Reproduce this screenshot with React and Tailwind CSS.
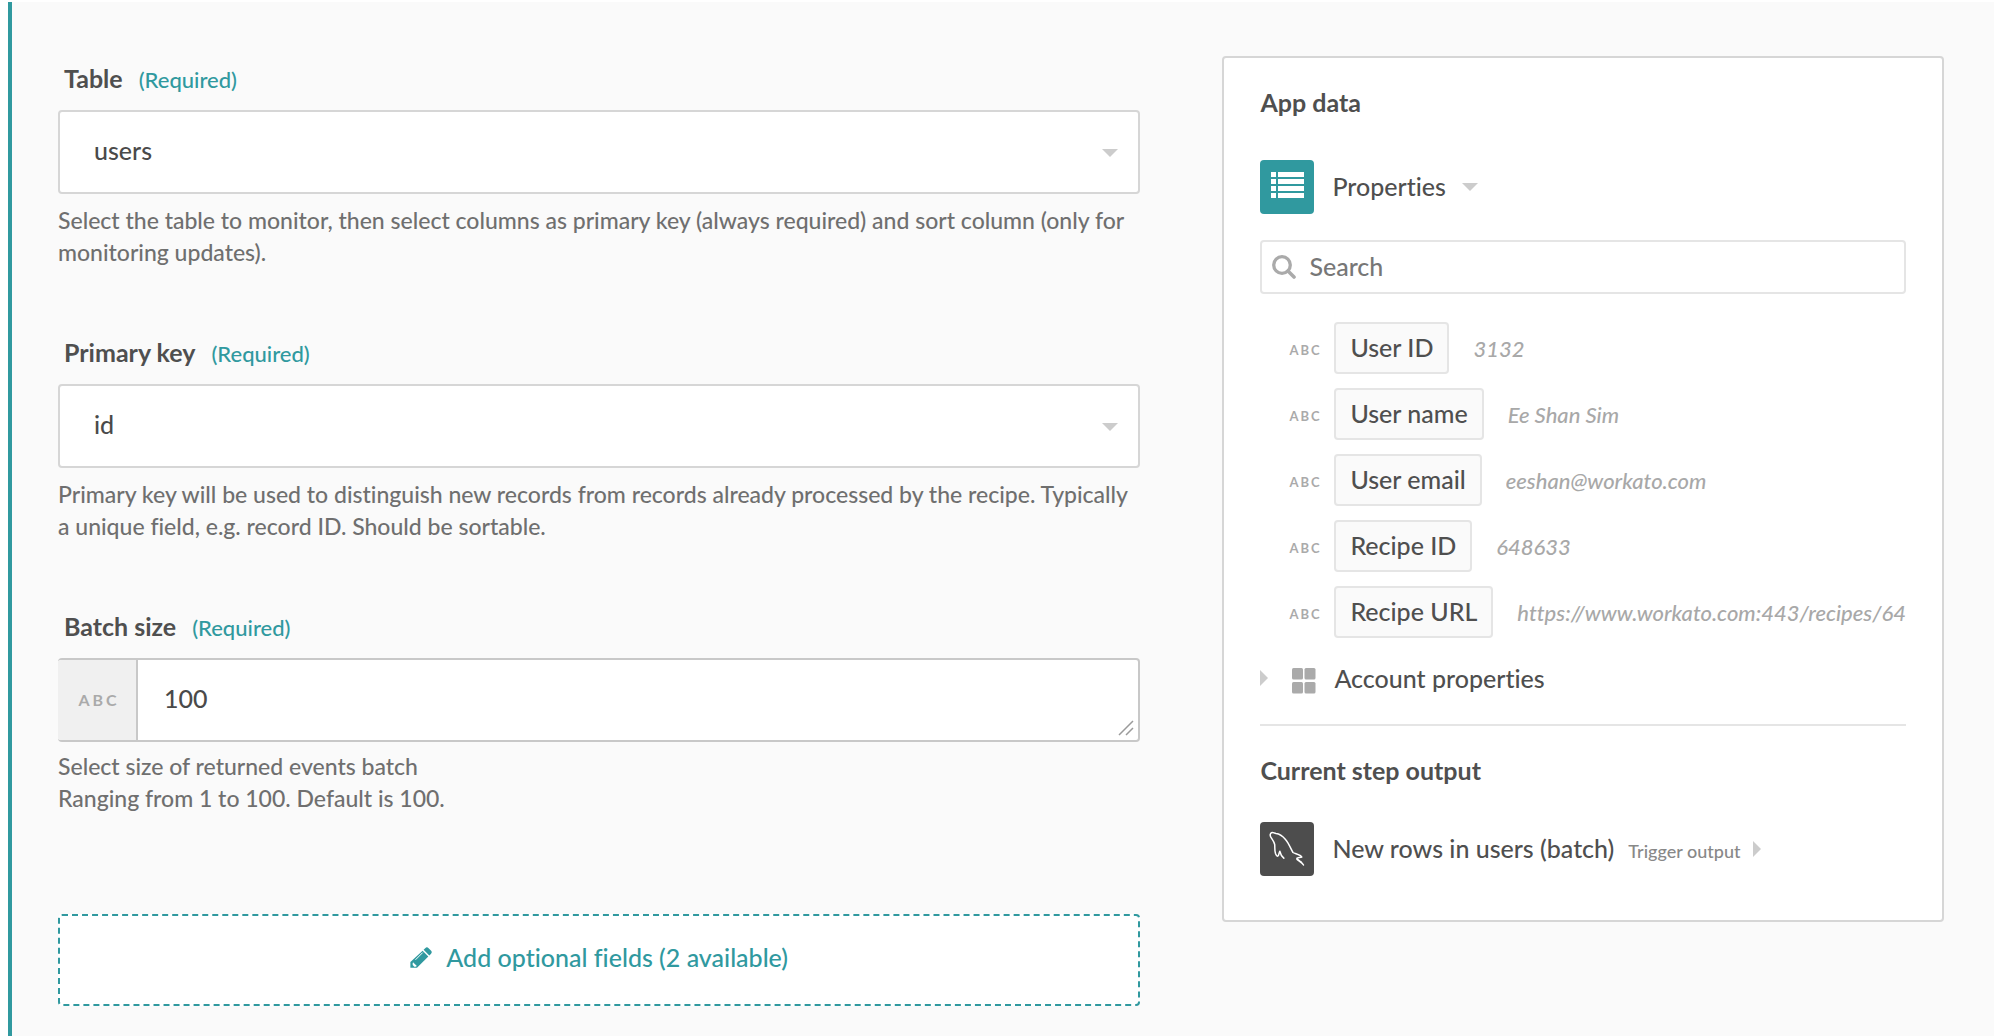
import React from "react";

function CaretDown() {
  return (
    <svg className="h-2 w-4 shrink-0 fill-[#ccc]" viewBox="0 0 16 8" aria-hidden="true">
      <path d="M0 0h16L8 8z" />
    </svg>
  );
}

function CaretRight() {
  return (
    <svg className="h-4 w-2 shrink-0 fill-[#ccc]" viewBox="0 0 8 16" aria-hidden="true">
      <path d="M0 0v16l8-8z" />
    </svg>
  );
}

function FieldLabel({ id, children }) {
  return (
    <div className="mb-3.5 flex items-baseline gap-4 px-1.5 leading-8">
      <label htmlFor={id} className="text-[25px] font-bold text-[#4f4f4f]">{children}</label>
      <span className="text-[22px] text-[#30999f]">(Required)</span>
    </div>
  );
}

function SelectField({ id, label, value, help }) {
  return (
    <div>
      <FieldLabel id={id}>{label}</FieldLabel>
      <div className="relative">
        <select
          id={id}
          defaultValue={value}
          className="block h-[84px] w-full appearance-none rounded border-2 border-[#d6d6d6] bg-white px-[34px] pb-0.5 text-[25px] text-[#4a4a4a]"
        >
          <option value={value}>{value}</option>
        </select>
        <span className="pointer-events-none absolute inset-y-0 right-[22px] flex items-center pt-0.5">
          <CaretDown />
        </span>
      </div>
      <p className="mt-2.5 text-[23px] leading-8 text-[#6f6f6f]">{help}</p>
    </div>
  );
}

const properties = [
  ["User ID", "3132"],
  ["User name", "Ee Shan Sim"],
  ["User email", "eeshan@workato.com"],
  ["Recipe ID", "648633"],
  ["Recipe URL", "https://www.workato.com:443/recipes/648633"],
];

export default function App() {
  return (
    <div className="min-h-screen bg-white px-2 pt-0.5 font-['Lato',sans-serif] font-medium text-[#4f4f4f] [font-variant-ligatures:no-common-ligatures]">
      <main className="grid min-h-[1034px] grid-cols-[3fr_2fr] items-start gap-[82px] border-l-4 border-[#30999f] bg-[#fafafa] pr-[50px] pl-[46px]">
        <form className="flex flex-col pt-[60px]">
          <div className="flex flex-col gap-[68px]">
            <SelectField
              id="table"
              label="Table"
              value="users"
              help="Select the table to monitor, then select columns as primary key (always required) and sort column (only for monitoring updates)."
            />
            <SelectField
              id="primary-key"
              label="Primary key"
              value="id"
              help="Primary key will be used to distinguish new records from records already processed by the recipe. Typically a unique field, e.g. record ID. Should be sortable."
            />
            <div>
              <FieldLabel id="batch-size">Batch size</FieldLabel>
              <div className="relative flex h-[84px] overflow-hidden rounded border-y-2 border-r-2 border-[#c8c8c8] bg-white">
                <span className="flex w-20 shrink-0 items-center justify-center border-r-2 border-[#c8c8c8] bg-[#f0f0f0] pl-1 text-base font-bold tracking-[3px] text-[#aaa]">
                  ABC
                </span>
                <textarea
                  id="batch-size"
                  rows={1}
                  defaultValue="100"
                  className="block w-full resize-none bg-transparent px-[26px] py-5 text-[25px] leading-9 text-[#4a4a4a]"
                />
                <svg className="pointer-events-none absolute right-1 bottom-1 size-4 stroke-[#9a9a9a]" viewBox="0 0 16 16" fill="none" strokeWidth="1.5" aria-hidden="true">
                  <path d="M1 15 15 1M8 15l7-7" />
                </svg>
              </div>
              <p className="mt-2 text-[23px] leading-8 text-[#6f6f6f]">
                Select size of returned events batch
                <br />
                Ranging from 1 to 100. Default is 100.
              </p>
            </div>
          </div>
          <button
            type="button"
            className="mt-[100px] flex h-[92px] items-center justify-center gap-3.5 rounded border-2 border-dashed border-[#30999f] bg-white pb-1 text-[25px] text-[#30999f]"
          >
            <svg className="size-[22px] fill-current" viewBox="0 0 22 22" aria-hidden="true">
              <path d="M15.2 1.2a2.4 2.4 0 0 1 3.4 0l2.3 2.3a2.4 2.4 0 0 1 0 3.400l-1.600 1.600-5.700-5.700z" />
              <path d="m12.600 3.800 5.700 5.700L7 20.800H.4v-5.700z" />
              <path d="m3 15.200 3.900 3.900-1.400.700-1.200-.1-1.600-1.600v-1.700z" className="fill-white" />
              <path d="m5.500 12.800 7.200-7.200" className="stroke-white" strokeWidth="1" />
            </svg>
            Add optional fields (2 available)
          </button>
        </form>

        <aside className="mt-[54px] min-w-0 rounded border-2 border-[#d6d6d6] bg-white px-9 pt-7 pb-11">
          <h2 className="text-[25px] leading-8 font-bold">App data</h2>
          <button type="button" className="mt-[42px] flex items-center gap-[18px] text-[25px]">
            <span className="flex size-[54px] items-center justify-center rounded bg-[#30999f]">
              <svg className="mb-1 h-[26px] w-[33px] fill-white" viewBox="0 0 33 26" aria-hidden="true">
                <path d="M0 0h5v5H0zM7 0h26v5H7zM0 7h5v5H0zM7 7h26v5H7zM0 14h5v5H0zM7 14h26v5H7zM0 21h5v5H0zM7 21h26v5H7z" />
              </svg>
            </span>
            <span className="flex items-center gap-4">
              Properties
              <CaretDown />
            </span>
          </button>
          <div className="relative mt-[26px]">
            <svg className="pointer-events-none absolute inset-y-0 left-3 my-auto size-6 stroke-[#aaa]" viewBox="0 0 24 24" fill="none" aria-hidden="true">
              <circle cx="10" cy="10" r="8.300" strokeWidth="3.300" />
              <path d="m16 16 6 6" strokeWidth="3.600" strokeLinecap="round" />
            </svg>
            <input
              type="search"
              aria-label="Search"
              placeholder="Search"
              className="block h-[54px] w-full rounded border-2 border-[#e5e5e5] bg-white pr-4 pb-0.5 pl-[47px] text-[25px] placeholder:text-[#777]"
            />
          </div>
          <ul className="mt-7 flex flex-col gap-3.5 pl-[29px]">
            {properties.map(([name, sample]) => (
              <li key={name} className="flex items-center">
                <span className="w-[45px] shrink-0 pt-1.5 text-[13px] font-bold tracking-[2px] text-[#aaa]">ABC</span>
                <button type="button" className="h-[52px] shrink-0 rounded border-2 border-[#e5e5e5] bg-[#fafafa] px-3.5 text-[25px]">
                  {name}
                </button>
                <span className="ml-6 overflow-hidden text-[22px] whitespace-nowrap text-[#a8a8a8] italic">{sample}</span>
              </li>
            ))}
          </ul>
          <button type="button" className="mt-6 flex items-center text-[25px] leading-8">
            <CaretRight />
            <svg className="mt-1.5 mr-[18px] ml-6 h-[26px] w-6 fill-[#aaa]" viewBox="0 0 24 26" aria-hidden="true">
              <rect width="11" height="11.500" rx="1.500" />
              <rect x="12.500" width="11" height="11.500" rx="1.500" />
              <rect y="14" width="11" height="11.500" rx="1.500" />
              <rect x="12.500" y="14" width="11" height="11.500" rx="1.500" />
            </svg>
            Account properties
          </button>
          <hr className="mt-[30px] border-t-2 border-[#e5e5e5]" />
          <h2 className="mt-7 text-[25px] leading-8 font-bold">Current step output</h2>
          <button type="button" className="mt-9 flex items-center gap-[18px] text-[25px]">
            <span className="size-[54px] rounded bg-[#4d4d4d]">
              <svg className="size-full" viewBox="0 0 54 54" fill="none" stroke="white" strokeWidth="1.500" strokeLinejoin="round" strokeLinecap="round" aria-hidden="true">
                <path d="M10.500 14.500c-.8-2 .2-4 2-4 1 0 2 .8 3.500 1 3.500.3 7 3 9.500 6 3.500 4 5.500 10 7.500 13 1.500 1.200 7.500 2 8.800 4.500-1.600.7-4 .5-5 1.300.7 1.500 3.500 3 4.700 4M43.500 43c-1-1.800-4-3.500-6.500-5.500M10.500 14.500c1 2 3.500 4.500 4.200 8 .3 2.500-.3 6 .8 9 .8 2 1.800 3 2.500 2.500.8-.6 1-3 1.800-4.800.6 2.500 2.200 5.500 4 7" />
              </svg>
            </span>
            <span className="flex items-center">
              New rows in users (batch)
              <span className="mt-1 mr-3 ml-3.5 text-lg text-[#888]">Trigger output</span>
              <CaretRight />
            </span>
          </button>
        </aside>
      </main>
    </div>
  );
}
